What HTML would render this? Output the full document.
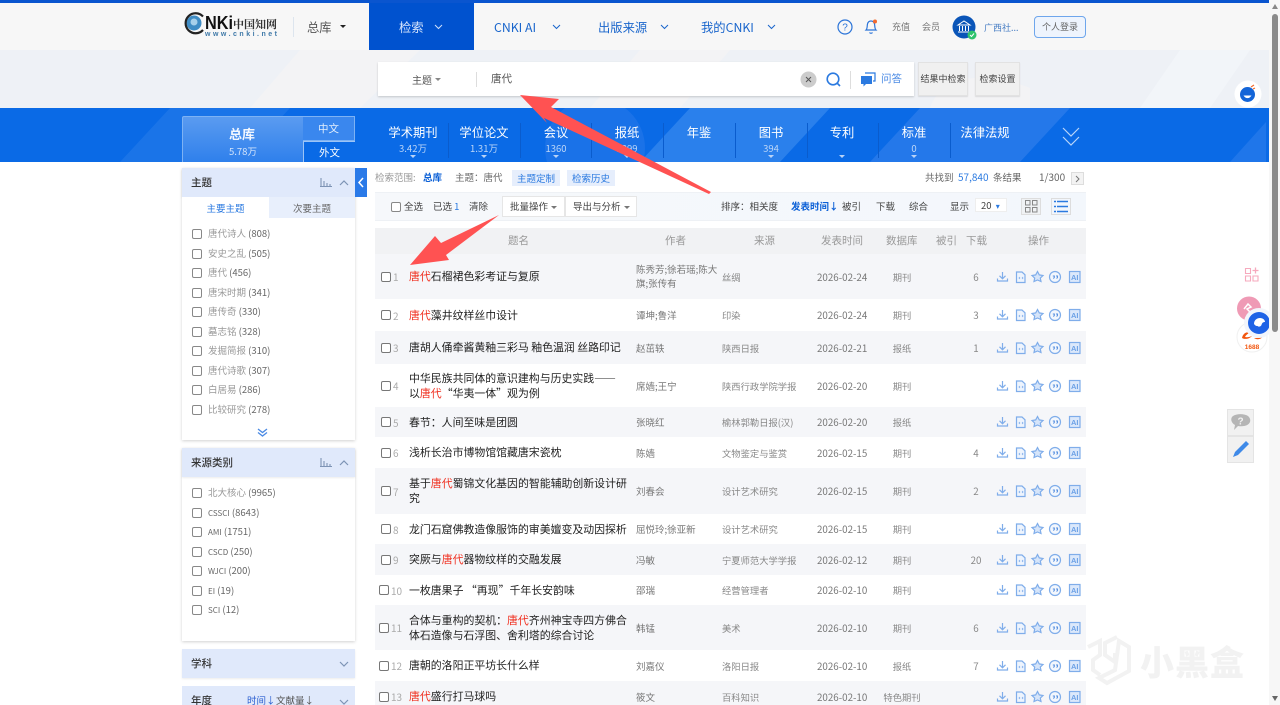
<!DOCTYPE html>
<html lang="zh-CN">
<head>
<meta charset="utf-8">
<title>CNKI</title>
<style>
html,body{margin:0;padding:0;width:1280px;height:705px;overflow:hidden;background:#fff}
body{position:relative;font-family:"Noto Sans CJK SC","Liberation Sans",sans-serif;font-size:9.5px;color:#444}
div,span,b,i,svg{position:absolute;box-sizing:border-box}
.t0{white-space:nowrap;line-height:1}
b{font-weight:700}
i{font-style:normal}
.nv{font-size:12.3px;color:#1a66cc;top:20px;white-space:nowrap;line-height:14px}
.bl{font-size:12.3px;color:#fff;top:125px;width:72px;text-align:center;line-height:14px;white-space:nowrap}
.ct{font-size:9.5px;color:#bcd6f8;top:143px;width:72px;text-align:center;line-height:11px}
.sp{width:1px;top:123px;height:35px;background:#0a5ccd}
.tr{width:0;height:0;border-left:3px solid transparent;border-right:3px solid transparent;border-top:3px solid #b9d3f7;top:155px}
.pnl{left:182px;width:173px;background:#fff;box-shadow:0 1px 3px rgba(0,0,0,.18)}
.ph{left:182px;width:173px;height:29px;background:#e0e9fb;box-shadow:0 1px 2px rgba(0,0,0,.08)}
.pt{left:9px;top:0;line-height:30px;font-size:10.5px;font-weight:500;color:#333;white-space:nowrap}
.cb{width:9.5px;height:9.5px;border:1px solid #888;border-radius:2px;background:#fff}
.li{left:208px;font-size:9.5px;color:#999;line-height:12px;white-space:nowrap}
.li em{font-style:normal;color:#666}
.top{top:171px;line-height:12px;font-size:9.5px;color:#666;white-space:nowrap}
.tb{top:200px;line-height:12px;font-size:9.5px;color:#444;white-space:nowrap}
.th{top:234px;line-height:14px;font-size:10.5px;color:#999;white-space:nowrap;text-align:center}
.r{left:375px;width:711px;background:#fff}
.s{background:#f5f6f9}
.r>*{top:0;height:100%;display:flex;align-items:center}
.r>i.c{left:6px;width:10px;height:10px;top:calc(50% - 5px);border:1px solid #777;border-radius:2px;background:#fff}
.w i.c{left:4px!important}
.n{left:18px;font-size:10px;color:#aaa;font-weight:400}
.w .n{left:16px}
.tt{left:34px;width:224px;font-size:10.9px;line-height:15px;color:#222}
.tt u{text-decoration:none;color:#f03020}
.au{left:261px;width:60px;font-size:9.5px;line-height:14px;color:#777;white-space:nowrap}
.so{left:347px;font-size:9.3px;color:#888;white-space:nowrap}
.da{left:442px;font-size:9.8px;color:#777;white-space:nowrap}
.db{left:500px;width:54px;justify-content:center;font-size:9.3px;color:#888}
.dl{left:581px;width:40px;justify-content:center;font-size:9.8px;color:#888}
.r>svg.op{left:621px;top:calc(50% - 7px);width:90px;height:14px;display:block}
.op text{font-family:"Liberation Sans",sans-serif;font-size:7.5px;font-weight:700;fill:#6ca1e6}
.dt{display:inline-block;position:static;width:0;height:0;border-left:3px solid transparent;border-right:3px solid transparent;border-top:3.500px solid #777;margin-left:3px;vertical-align:1px}
</style>
</head>
<body>
<svg width="0" height="0" style="left:0;top:0"><defs>
<g id="ops" fill="none" stroke="#7fadea" stroke-width="1.200">
<path d="M6.500 2v6.500M3.500 5.800l3 3 3-3M1.500 8.500v2.500h10V8.500"/>
<path d="M20.500 2h5.500l3 2.800V12.500h-8.500z" fill="#eef4fd"/><path d="M24 7l-1 1 1 1M26 7l1 1-1 1" stroke-width=".8"/>
<path d="M41.500 1.500l1.800 3.400 3.700.6-2.700 2.600.7 3.400-3.500-1.500-3.500 1.500.7-3.400-2.700-2.600 3.700-.6z" fill="#d6e5fa"/>
<circle cx="59" cy="7" r="5.500" fill="#f3f7fd"/><path d="M56.800 6h1.500v1.400l-.9 1.200M60 6h1.500v1.400l-.9 1.200" stroke-width="1.100" stroke="#5a92e0"/>
<rect x="73.500" y="1.500" width="10.500" height="11" fill="#dbe8fb"/>
</g></defs></svg>

<!-- top line & header -->
<div style="left:0;top:0;width:1269px;height:3px;background:#0a55cf"></div>
<div style="left:0;top:3px;width:1269px;height:47px;background:#f7f7f7"></div>
<!-- logo -->
<svg style="left:182px;top:12px" width="100" height="28" viewBox="0 0 100 28">
<circle cx="12" cy="11" r="7.500" fill="#3f8cc4"/><circle cx="12" cy="10" r="3.500" fill="#a7d0ea"/>
<path d="M21 4.500A10 10 0 1 0 21 18" fill="none" stroke="#222" stroke-width="2.200"/>
<text x="23" y="17" font-family="Liberation Sans" font-weight="700" font-size="18" fill="#111" textLength="28" lengthAdjust="spacingAndGlyphs">NKi</text>
<text x="51" y="16" font-family="Noto Serif CJK SC" font-weight="700" font-size="11" fill="#333" textLength="44">中国知网</text>
<text x="23" y="24" font-family="Liberation Sans" font-weight="700" font-size="7" fill="#3f79a8" textLength="72">www.cnki.net</text>
</svg>
<div style="left:293px;top:17px;width:1px;height:20px;background:#dde5ee"></div>
<div class="nv" style="left:307px;color:#555">总库</div>
<div style="left:340px;top:25px;border-left:3.500px solid transparent;border-right:3.500px solid transparent;border-top:3.500px solid #222"></div>
<div style="left:369px;top:3px;width:105px;height:47px;background:#0052cf"></div>
<div class="nv" style="left:399px;color:#d5e4fb">检索</div>
<svg style="left:434px;top:24px" width="9" height="6"><path d="M1 1l3.500 3.500L8 1" fill="none" stroke="#cfe0fa" stroke-width="1"/></svg>
<div class="nv" style="left:494px">CNKI AI</div>
<svg style="left:552px;top:24px" width="9" height="6"><path d="M1 1l3.500 3.500L8 1" fill="none" stroke="#1a66cc" stroke-width="1"/></svg>
<div class="nv" style="left:598px">出版来源</div>
<svg style="left:660px;top:24px" width="9" height="6"><path d="M1 1l3.500 3.500L8 1" fill="none" stroke="#1a66cc" stroke-width="1"/></svg>
<div class="nv" style="left:701px">我的CNKI</div>
<svg style="left:767px;top:24px" width="9" height="6"><path d="M1 1l3.500 3.500L8 1" fill="none" stroke="#1a66cc" stroke-width="1"/></svg>
<svg style="left:836px;top:18px" width="18" height="18"><circle cx="9" cy="9" r="7" fill="none" stroke="#2b74d8" stroke-width="1.200"/><text x="9" y="12.500" text-anchor="middle" font-size="10" font-family="Liberation Sans" fill="#2b74d8">?</text></svg>
<svg style="left:863px;top:17px" width="16" height="20"><path d="M3 13c1.500-1.500 1-4 1.500-6 .5-2 2-3 3.500-3s3 1 3.500 3c.5 2 0 4.500 1.500 6zM6.500 15.500c.5 1 2.500 1 3 0" fill="none" stroke="#2b74d8" stroke-width="1.200"/><circle cx="12" cy="4.500" r="2" fill="#f26a2e"/></svg>
<div class="t0" style="left:892px;top:22px;font-size:9px;color:#777">充值</div>
<div class="t0" style="left:922px;top:22px;font-size:9px;color:#777">会员</div>
<svg style="left:952px;top:15px" width="26" height="26"><circle cx="12" cy="12" r="11.500" fill="#0a55b8"/><path d="M6 10l6-4 6 4zM7.500 11v5M10.500 11v5M13.500 11v5M16.500 11v5M6 17h12" fill="none" stroke="#fff" stroke-width="1"/><circle cx="20" cy="20" r="4.500" fill="#2fc46d"/><path d="M18 20l1.500 1.500 2.500-3" fill="none" stroke="#fff"/></svg>
<div class="t0" style="left:984px;top:23px;font-size:9px;color:#4a7fc4">广西社...</div>
<div class="t0" style="left:1034px;top:16px;width:52px;height:22px;border:1px solid #6ea6ec;border-radius:4px;background:#eef4fd;text-align:center;line-height:20px;font-size:9px;color:#666">个人登录</div>

<!-- search band -->
<div style="left:0;top:50px;width:1269px;height:58px;background:#eef1f6"></div>
<svg style="left:0;top:50px" width="1269" height="58"><path d="M250 58L300 0h120l-60 58zM640 0h90l-50 58h-90zM930 58c10-30 50-40 100-20v20z" fill="#f3f3f5"/><path d="M1140 58l40-58h70l-40 58z" fill="#f2f5f9"/></svg>
<div style="left:378px;top:62px;width:536px;height:34px;background:#fff;box-shadow:0 1px 2px rgba(0,0,0,.18)"></div>
<div class="t0" style="left:412px;top:75px;font-size:10px;color:#555">主题</div>
<div style="left:435px;top:78px;border-left:3px solid transparent;border-right:3px solid transparent;border-top:3px solid #888"></div>
<div style="left:476px;top:72px;width:1px;height:15px;background:#ddd"></div>
<div class="t0" style="left:491px;top:74px;font-size:10.500px;color:#555">唐代</div>
<svg style="left:800px;top:71px" width="18" height="18"><circle cx="8.500" cy="8.500" r="8" fill="#ccc"/><path d="M6 6l5 5M11 6l-5 5" stroke="#555" stroke-width="1"/></svg>
<svg style="left:825px;top:71px" width="18" height="18"><circle cx="8" cy="8" r="5.800" fill="none" stroke="#2b7ae0" stroke-width="1.600"/><path d="M12 12l3 3" stroke="#2b7ae0" stroke-width="1.600"/></svg>
<div style="left:850px;top:71px;width:1px;height:18px;background:#ddd"></div>
<svg style="left:860px;top:71px" width="17" height="17"><path d="M5 2h10v8h-2" fill="none" stroke="#2b7ae0" stroke-width="1.200"/><path d="M1 5h11v8H6l-2.500 2.500V13H1z" fill="#2b7ae0"/></svg>
<div class="t0" style="left:881px;top:74px;font-size:10.500px;color:#4a8ae4">问答</div>
<div class="t0" style="left:918px;top:62px;width:50px;height:34px;background:#f0f0f0;border:1px solid #e2e2e2;box-shadow:0 1px 1px rgba(0,0,0,.1);text-align:center;line-height:32px;font-size:9px;color:#444">结果中检索</div>
<div class="t0" style="left:975px;top:62px;width:45px;height:34px;background:#f0f0f0;border:1px solid #e2e2e2;box-shadow:0 1px 1px rgba(0,0,0,.1);text-align:center;line-height:32px;font-size:9px;color:#444">检索设置</div>

<!-- blue band -->
<div style="left:0;top:108px;width:1269px;height:54px;background:#0a6ae6"></div>
<svg style="left:0;top:108px" width="1269" height="54"><path d="M120 54L170 0h120l-50 54z" fill="#1a74e8"/><path d="M640 54L690 0h140l-50 54z" fill="#2a80ec"/><path d="M870 54L920 0h150l-50 54z" fill="#2478ea"/><path d="M1230 54l36-40v40z" fill="#1f76ea"/><circle cx="595" cy="40" r="50" fill="#1a72e8"/></svg>
<div style="left:182px;top:116px;width:121px;height:46px;background:linear-gradient(180deg,#5a9bf0,#2f80ec);border:1px solid #7db2f4;border-right:0;border-bottom:0;border-radius:2px 0 0 0"></div>
<div style="left:303px;top:116px;width:52px;height:25px;background:#3a87ee;border:1px solid #7db2f4;border-left:0;text-align:center;line-height:24px;font-size:10.500px;color:#e2eefc">中文</div>
<div style="left:303px;top:141px;width:52px;height:21px;background:#0a6ae6;border-top:1px solid #9cc4f6;border-left:1px solid #9cc4f6;text-align:center;line-height:22px;font-size:10.500px;color:#fff">外文</div>
<div class="t0" style="left:229px;top:127px;font-size:13px;font-weight:700;color:#f2f7ff">总库</div>
<div class="t0" style="left:229px;top:147px;font-size:9.500px;color:#d5e5fb">5.78万</div>

<div class="bl" style="left:377px">学术期刊</div><div class="ct" style="left:377px">3.42万</div><div class="tr" style="left:410px"></div>
<div class="sp" style="left:448px"></div>
<div class="bl" style="left:448px">学位论文</div><div class="ct" style="left:448px">1.31万</div><div class="tr" style="left:481px"></div>
<div class="sp" style="left:520px"></div>
<div class="bl" style="left:520px">会议</div><div class="ct" style="left:520px">1360</div><div class="tr" style="left:553px"></div>
<div class="sp" style="left:591px"></div>
<div class="bl" style="left:591px">报纸</div><div class="ct" style="left:591px">1399</div><div class="tr" style="left:624px"></div>
<div class="sp" style="left:663px"></div>
<div class="bl" style="left:663px">年鉴</div>
<div class="sp" style="left:735px"></div>
<div class="bl" style="left:735px">图书</div><div class="ct" style="left:735px">394</div><div class="tr" style="left:768px"></div>
<div class="sp" style="left:807px"></div>
<div class="bl" style="left:806px">专利</div><div class="tr" style="left:839px"></div>
<div class="sp" style="left:878px"></div>
<div class="bl" style="left:878px">标准</div><div class="ct" style="left:878px">0</div><div class="tr" style="left:911px"></div>
<div class="sp" style="left:950px"></div>
<div class="bl" style="left:949px">法律法规</div>
<svg style="left:1061px;top:126px" width="20" height="22"><path d="M2 2l8 8 8-8M2 11l8 8 8-8" fill="none" stroke="#b9d5f9" stroke-width="1.200"/></svg>

<!-- sidebar panel 1 -->
<div class="pnl" style="top:168px;height:272px"></div>
<div class="ph" style="top:168px"><div class="pt">主题</div>
<svg style="left:138px;top:10px" width="12" height="9"><path d="M1 0v8M4 3v5M7 5v3M10 6v2M0 8.500h12" stroke="#7d93b5" stroke-width="1.100"/></svg>
<svg style="left:157px;top:11px" width="10" height="7"><path d="M1 6l4-4 4 4" fill="none" stroke="#7d93b5" stroke-width="1.200"/></svg></div>
<div style="left:355px;top:168px;width:12px;height:29px;background:#2a7ae8"></div>
<svg style="left:357px;top:177px" width="8" height="11"><path d="M6 1L2 5.500 6 10" fill="none" stroke="#fff" stroke-width="1.500"/></svg>
<div class="t0" style="left:182px;top:197px;width:87px;height:21px;background:#fff;text-align:center;line-height:22px;font-size:9.500px;color:#2b7ae0">主要主题</div>
<div class="t0" style="left:269px;top:197px;width:86px;height:21px;background:#e8effc;text-align:center;line-height:22px;font-size:9.500px;color:#666">次要主题</div>
<i class="cb" style="left:192px;top:229px"></i><div class="li" style="top:227px">唐代诗人 <em>(808)</em></div>
<i class="cb" style="left:192px;top:249px"></i><div class="li" style="top:247px">安史之乱 <em>(505)</em></div>
<i class="cb" style="left:192px;top:268px"></i><div class="li" style="top:266px">唐代 <em>(456)</em></div>
<i class="cb" style="left:192px;top:288px"></i><div class="li" style="top:286px">唐宋时期 <em>(341)</em></div>
<i class="cb" style="left:192px;top:307px"></i><div class="li" style="top:305px">唐传奇 <em>(330)</em></div>
<i class="cb" style="left:192px;top:327px"></i><div class="li" style="top:325px">墓志铭 <em>(328)</em></div>
<i class="cb" style="left:192px;top:346px"></i><div class="li" style="top:344px">发掘简报 <em>(310)</em></div>
<i class="cb" style="left:192px;top:366px"></i><div class="li" style="top:364px">唐代诗歌 <em>(307)</em></div>
<i class="cb" style="left:192px;top:385px"></i><div class="li" style="top:383px">白居易 <em>(286)</em></div>
<i class="cb" style="left:192px;top:405px"></i><div class="li" style="top:403px">比较研究 <em>(278)</em></div>
<svg style="left:257px;top:428px" width="11" height="10"><path d="M1 1l4.500 3.500L10 1M1 4.500l4.500 3.500L10 4.500" fill="none" stroke="#4a8ae4" stroke-width="1.300"/></svg>

<!-- sidebar panel 2 -->
<div class="pnl" style="top:448px;height:193px"></div>
<div class="ph" style="top:448px"><div class="pt">来源类别</div>
<svg style="left:138px;top:10px" width="12" height="9"><path d="M1 0v8M4 3v5M7 5v3M10 6v2M0 8.500h12" stroke="#7d93b5" stroke-width="1.100"/></svg>
<svg style="left:157px;top:11px" width="10" height="7"><path d="M1 6l4-4 4 4" fill="none" stroke="#7d93b5" stroke-width="1.200"/></svg></div>
<i class="cb" style="left:192px;top:488px"></i><div class="li" style="top:486px">北大核心 <em>(9965)</em></div>
<i class="cb" style="left:192px;top:508px"></i><div class="li" style="top:506px;color:#666"><span style="position:static;font-size:8px">CSSCI</span> <em>(8643)</em></div>
<i class="cb" style="left:192px;top:527px"></i><div class="li" style="top:525px;color:#666"><span style="position:static;font-size:8px">AMI</span> <em>(1751)</em></div>
<i class="cb" style="left:192px;top:547px"></i><div class="li" style="top:545px;color:#666"><span style="position:static;font-size:8px">CSCD</span> <em>(250)</em></div>
<i class="cb" style="left:192px;top:566px"></i><div class="li" style="top:564px;color:#666"><span style="position:static;font-size:8px">WJCI</span> <em>(200)</em></div>
<i class="cb" style="left:192px;top:586px"></i><div class="li" style="top:584px;color:#666"><span style="position:static;font-size:8px">EI</span> <em>(19)</em></div>
<i class="cb" style="left:192px;top:605px"></i><div class="li" style="top:603px;color:#666"><span style="position:static;font-size:8px">SCI</span> <em>(12)</em></div>

<div class="ph" style="top:649px"><div class="pt">学科</div>
<svg style="left:157px;top:12px" width="10" height="7"><path d="M1 1l4 4 4-4" fill="none" stroke="#7d93b5" stroke-width="1.200"/></svg></div>
<div class="ph" style="top:686px;height:19px;box-shadow:none"><div class="pt">年度</div>
<div class="t0" style="left:65px;top:10px;font-size:9.500px;color:#2b5fd0">时间↓</div>
<div class="t0" style="left:94px;top:10px;font-size:9.500px;color:#555">文献量↓</div>
<svg style="left:157px;top:13px" width="10" height="6"><path d="M1 1l4 4 4-4" fill="none" stroke="#7d93b5" stroke-width="1.200"/></svg></div>

<!-- top info -->
<div class="top" style="left:375px;color:#999">检索范围:</div>
<div class="top" style="left:423px;color:#0a5fd6;font-weight:700">总库</div>
<div class="top" style="left:455px">主题：唐代</div>
<div class="top" style="left:512px;top:170px;width:48px;height:16px;background:#e6eefc;color:#2b7ae0;text-align:center;line-height:16px;font-size:9.500px">主题定制</div>
<div class="top" style="left:567px;top:170px;width:48px;height:16px;background:#e6eefc;color:#2b7ae0;text-align:center;line-height:16px;font-size:9.500px">检索历史</div>
<div class="top" style="left:925px">共找到</div>
<div class="top" style="left:958px;color:#2b7ae0;font-size:10px">57,840</div>
<div class="top" style="left:993px">条结果</div>
<div class="top" style="left:1039px;font-size:10px">1/300</div>
<div style="left:1071px;top:172px;width:13px;height:13px;background:#f3f3f3;border:1px solid #ddd"></div>
<svg style="left:1074px;top:175px" width="7" height="8"><path d="M2 1l3 3-3 3" fill="none" stroke="#777"/></svg>

<!-- toolbar -->
<div style="left:375px;top:192px;width:711px;height:29px;background:linear-gradient(90deg,#f6f8fb,#f3f7fc);border-top:1px solid #eef1f5;border-bottom:1px solid #eef1f5"></div>
<i class="cb" style="left:391px;top:202px"></i>
<div class="tb" style="left:404px">全选</div>
<div class="tb" style="left:433px">已选 <span style="position:static;color:#2b7ae0">1</span></div>
<div class="tb" style="left:469px">清除</div>
<div class="tb" style="left:502px;top:196px;width:63px;height:21px;background:#fff;border:1px solid #e6e6e6;line-height:19px;padding-left:7px">批量操作<i class="dt"></i></div>
<div class="tb" style="left:565px;top:196px;width:72px;height:21px;background:#fff;border:1px solid #e6e6e6;line-height:19px;padding-left:7px">导出与分析<i class="dt"></i></div>
<div class="tb" style="left:721px">排序：相关度</div>
<div class="tb" style="left:791px;color:#0a5fd6;font-weight:700">发表时间↓</div>
<div class="tb" style="left:842px">被引</div>
<div class="tb" style="left:876px">下载</div>
<div class="tb" style="left:909px">综合</div>
<div class="tb" style="left:950px">显示</div>
<div class="tb" style="left:975px;top:198px;width:32px;height:14px;background:#fff;border:1px solid #eee;line-height:12px;padding-left:5px">20 <span style="position:static;color:#2b7ae0;font-size:8px;margin-left:2px">▾</span></div>
<div style="left:1021px;top:198px;width:20px;height:17px;background:#f0f2f4;border:1px solid #ddd"></div>
<svg style="left:1025px;top:200px" width="13" height="13"><path d="M.5.500h4.500v4.500H.5zM7.500.500H12v4.500H7.500zM.5 7.500h4.500V12H.5zM7.500 7.500H12V12H7.500z" fill="none" stroke="#888"/></svg>
<div style="left:1051px;top:198px;width:20px;height:17px;background:#f2f6fc;border:1px solid #ddd"></div>
<svg style="left:1054px;top:200px" width="14" height="13"><path d="M0 1.500h2M3 1.500h11M0 6.500h2M3 6.500h11M0 11.500h2M3 11.500h11" stroke="#2b7ae0" stroke-width="1.500"/></svg>

<!-- table head -->
<div style="left:375px;top:228px;width:711px;height:26px;background:#f1f2f4"></div>
<div class="th" style="left:508px">题名</div>
<div class="th" style="left:665px">作者</div>
<div class="th" style="left:754px">来源</div>
<div class="th" style="left:821px">发表时间</div>
<div class="th" style="left:886px">数据库</div>
<div class="th" style="left:936px">被引</div>
<div class="th" style="left:966px">下载</div>
<div class="th" style="left:1028px">操作</div>

<!-- rows -->
<div class="r s" style="top:254px;height:45px"><i class="c"></i><b class="n">1</b><div class="tt"><span style="position:static"><u>唐代</u>石榴裙色彩考证与复原</span></div><div class="au"><span style="position:static;margin-top:-1px">陈秀芳;徐若瑶;陈大<br>旗;张传有</span></div><div class="so">丝绸</div><div class="da">2026-02-24</div><div class="db">期刊</div><div class="dl">6</div><svg class="op"><use href="#ops"/><text x="75" y="10">AI</text></svg></div>
<div class="r" style="top:299px;height:32px"><i class="c"></i><b class="n">2</b><div class="tt"><span style="position:static"><u>唐代</u>藻井纹样丝巾设计</span></div><div class="au"><span style="position:static">谭坤;鲁洋</span></div><div class="so">印染</div><div class="da">2026-02-24</div><div class="db">期刊</div><div class="dl">3</div><svg class="op"><use href="#ops"/><text x="75" y="10">AI</text></svg></div>
<div class="r s" style="top:331px;height:33px"><i class="c"></i><b class="n">3</b><div class="tt"><span style="position:static">唐胡人俑牵酱黄釉三彩马 釉色温润 丝路印记</span></div><div class="au"><span style="position:static">赵茁轶</span></div><div class="so">陕西日报</div><div class="da">2026-02-21</div><div class="db">报纸</div><div class="dl">1</div><svg class="op"><use href="#ops"/><text x="75" y="10">AI</text></svg></div>
<div class="r" style="top:364px;height:43px"><i class="c"></i><b class="n">4</b><div class="tt"><span style="position:static;white-space:nowrap">中华民族共同体的意识建构与历史实践——<br>以<u>唐代</u>“华夷一体”观为例</span></div><div class="au"><span style="position:static">席嫱;王宁</span></div><div class="so">陕西行政学院学报</div><div class="da">2026-02-20</div><div class="db">期刊</div><svg class="op"><use href="#ops"/><text x="75" y="10">AI</text></svg></div>
<div class="r s" style="top:407px;height:30px"><i class="c"></i><b class="n">5</b><div class="tt"><span style="position:static">春节：人间至味是团圆</span></div><div class="au"><span style="position:static">张晓红</span></div><div class="so">榆林郭勒日报(汉)</div><div class="da">2026-02-20</div><div class="db">报纸</div><svg class="op"><use href="#ops"/><text x="75" y="10">AI</text></svg></div>
<div class="r" style="top:437px;height:31px"><i class="c"></i><b class="n">6</b><div class="tt"><span style="position:static">浅析长治市博物馆馆藏唐宋瓷枕</span></div><div class="au"><span style="position:static">陈嫱</span></div><div class="so">文物鉴定与鉴赏</div><div class="da">2026-02-15</div><div class="db">期刊</div><div class="dl">4</div><svg class="op"><use href="#ops"/><text x="75" y="10">AI</text></svg></div>
<div class="r s" style="top:468px;height:46px"><i class="c"></i><b class="n">7</b><div class="tt"><span style="position:static">基于<u>唐代</u>蜀锦文化基因的智能辅助创新设计研<br>究</span></div><div class="au"><span style="position:static">刘春会</span></div><div class="so">设计艺术研究</div><div class="da">2026-02-15</div><div class="db">期刊</div><div class="dl">2</div><svg class="op"><use href="#ops"/><text x="75" y="10">AI</text></svg></div>
<div class="r" style="top:514px;height:30px"><i class="c"></i><b class="n">8</b><div class="tt"><span style="position:static">龙门石窟佛教造像服饰的审美嬗变及动因探析</span></div><div class="au"><span style="position:static">屈悦玲;徐亚新</span></div><div class="so">设计艺术研究</div><div class="da">2026-02-15</div><div class="db">期刊</div><svg class="op"><use href="#ops"/><text x="75" y="10">AI</text></svg></div>
<div class="r s" style="top:544px;height:31px"><i class="c"></i><b class="n">9</b><div class="tt"><span style="position:static">突厥与<u>唐代</u>器物纹样的交融发展</span></div><div class="au"><span style="position:static">冯敏</span></div><div class="so">宁夏师范大学学报</div><div class="da">2026-02-12</div><div class="db">期刊</div><div class="dl">20</div><svg class="op"><use href="#ops"/><text x="75" y="10">AI</text></svg></div>
<div class="r w" style="top:575px;height:30px"><i class="c"></i><b class="n">10</b><div class="tt"><span style="position:static">一枚唐果子 “再现”千年长安韵味</span></div><div class="au"><span style="position:static">邵瑞</span></div><div class="so">经营管理者</div><div class="da">2026-02-10</div><div class="db">期刊</div><svg class="op"><use href="#ops"/><text x="75" y="10">AI</text></svg></div>
<div class="r s w" style="top:605px;height:45px"><i class="c"></i><b class="n">11</b><div class="tt"><span style="position:static">合体与重构的契机：<u>唐代</u>齐州神宝寺四方佛合<br>体石造像与石浮图、舍利塔的综合讨论</span></div><div class="au"><span style="position:static">韩锰</span></div><div class="so">美术</div><div class="da">2026-02-10</div><div class="db">期刊</div><div class="dl">6</div><svg class="op"><use href="#ops"/><text x="75" y="10">AI</text></svg></div>
<div class="r w" style="top:650px;height:31px"><i class="c"></i><b class="n">12</b><div class="tt"><span style="position:static">唐朝的洛阳正平坊长什么样</span></div><div class="au"><span style="position:static">刘嘉仪</span></div><div class="so">洛阳日报</div><div class="da">2026-02-10</div><div class="db">报纸</div><div class="dl">7</div><svg class="op"><use href="#ops"/><text x="75" y="10">AI</text></svg></div>
<div class="r s w" style="top:681px;height:31px"><i class="c"></i><b class="n">13</b><div class="tt"><span style="position:static"><u>唐代</u>盛行打马球吗</span></div><div class="au"><span style="position:static">筱文</span></div><div class="so">百科知识</div><div class="da">2026-02-10</div><div class="db">特色期刊</div><svg class="op"><use href="#ops"/><text x="75" y="10">AI</text></svg></div>

<!-- watermark -->
<svg style="left:1085px;top:635px" width="48" height="52"><path d="M3 12l12-6v14l-7 5v10l7 5M32 2L20 8v12l10 7v-9M34 6l10 6v24l-22 12-8-5 16-8z" fill="none" stroke="#f2f2f2" stroke-width="4"/></svg>
<div class="t0" style="left:1140px;top:644px;font-size:34px;color:#f2f2f2;letter-spacing:1px;font-weight:900">小黑盒</div>

<!-- red arrows -->
<svg style="left:0;top:0" width="1280" height="705">
<polygon points="520,95 559,99 551,107 711,192 709,194 544,118 547,123" fill="#ff5252"/>
<polygon points="410,265 435,236 441,243 499,215 446,255 449,260" fill="#ff5252"/>
</svg>

<!-- floating right -->
<svg style="left:1233px;top:79px" width="30" height="30"><circle cx="15" cy="15" r="13.500" fill="#fff"/><circle cx="14.500" cy="15.500" r="7.500" fill="#1465d8"/><path d="M10.500 16.500c2 3.500 6 3.500 8 0z" fill="#fff"/><path d="M18 8l3-2M20 10l2-1" stroke="#f26a2e" stroke-width="1.200"/></svg>
<svg style="left:1235px;top:258px" width="34" height="34"><circle cx="16" cy="16" r="13" fill="#fff"/><path d="M10.500 10.500h5v5h-5zM10.500 18h5v5h-5zM18 18h5v5h-5z" fill="none" stroke="#f6a9bd" stroke-width="1.100"/><path d="M20.500 9.500v6M17.500 12.500h6" stroke="#f6a9bd" stroke-width="1.300"/></svg>
<svg style="left:1233px;top:293px" width="34" height="34"><circle cx="16" cy="15.500" r="12" fill="#ef9ab5"/><path d="M11 16l4-5 3 3-4 2 3 3" fill="none" stroke="#fff" stroke-width="1.500"/></svg>
<svg style="left:1236px;top:322px" width="34" height="32"><circle cx="16" cy="15" r="15" fill="#fff" stroke="#f0f0f0"/><path d="M6 16c1-5 5-7 9-5-3 0-5 2-6 4 2 .5 5 0 7-1-2 2.500-7 4-10 2zM18 16c3 .5 7-.5 10-3-1 3-6 6-10 3z" fill="#f2560f"/><text x="16" y="27" text-anchor="middle" font-family="Liberation Sans" font-size="6.500" font-weight="700" fill="#f2560f">1688</text></svg>
<svg style="left:1243px;top:307px" width="32" height="32"><circle cx="16" cy="16" r="15" fill="#f2f5fb"/><circle cx="16" cy="16" r="11" fill="#1f63e6"/><path d="M11 17c0-4 3-6 6-6s5 2 5 4c-2 0-3 1-3.500 3-1 2-3 2-4 1-1 0-2 0-3.500-2z" fill="#fff"/></svg>
<div style="left:1227px;top:409px;width:27px;height:27px;background:#f1f1f1;border:1px solid #e4e4e4"></div>
<div style="left:1227px;top:436px;width:27px;height:27px;background:#f1f1f1;border:1px solid #e4e4e4"></div>
<svg style="left:1230px;top:413px" width="21" height="20"><path d="M3 3c4-2.500 11-2.500 15 0 3 2.500 3 6.500 0 8.500-3 2-7 2-10 1.500L4 17l1-5C1 10 0 5 3 3z" fill="#b5b5b5"/><text x="10.500" y="11.500" text-anchor="middle" font-family="Liberation Sans" font-weight="700" font-size="10" fill="#f1f1f1">?</text></svg>
<svg style="left:1231px;top:439px" width="20" height="20"><path d="M2 18l2-5L15 2l3 3L7 16z" fill="#3f8ae8"/></svg>

<!-- scrollbar -->
<div style="left:1269px;top:0;width:11px;height:705px;background:#f7f7f7"></div>
<div style="left:1272px;top:14px;width:6px;height:318px;background:#8b8b8b;border-radius:3px"></div>
<div style="left:1272px;top:4px;border-left:3px solid transparent;border-right:3px solid transparent;border-bottom:5px solid #888"></div>
<div style="left:1272px;top:696px;border-left:3px solid transparent;border-right:3px solid transparent;border-top:5px solid #666"></div>
</body>
</html>
